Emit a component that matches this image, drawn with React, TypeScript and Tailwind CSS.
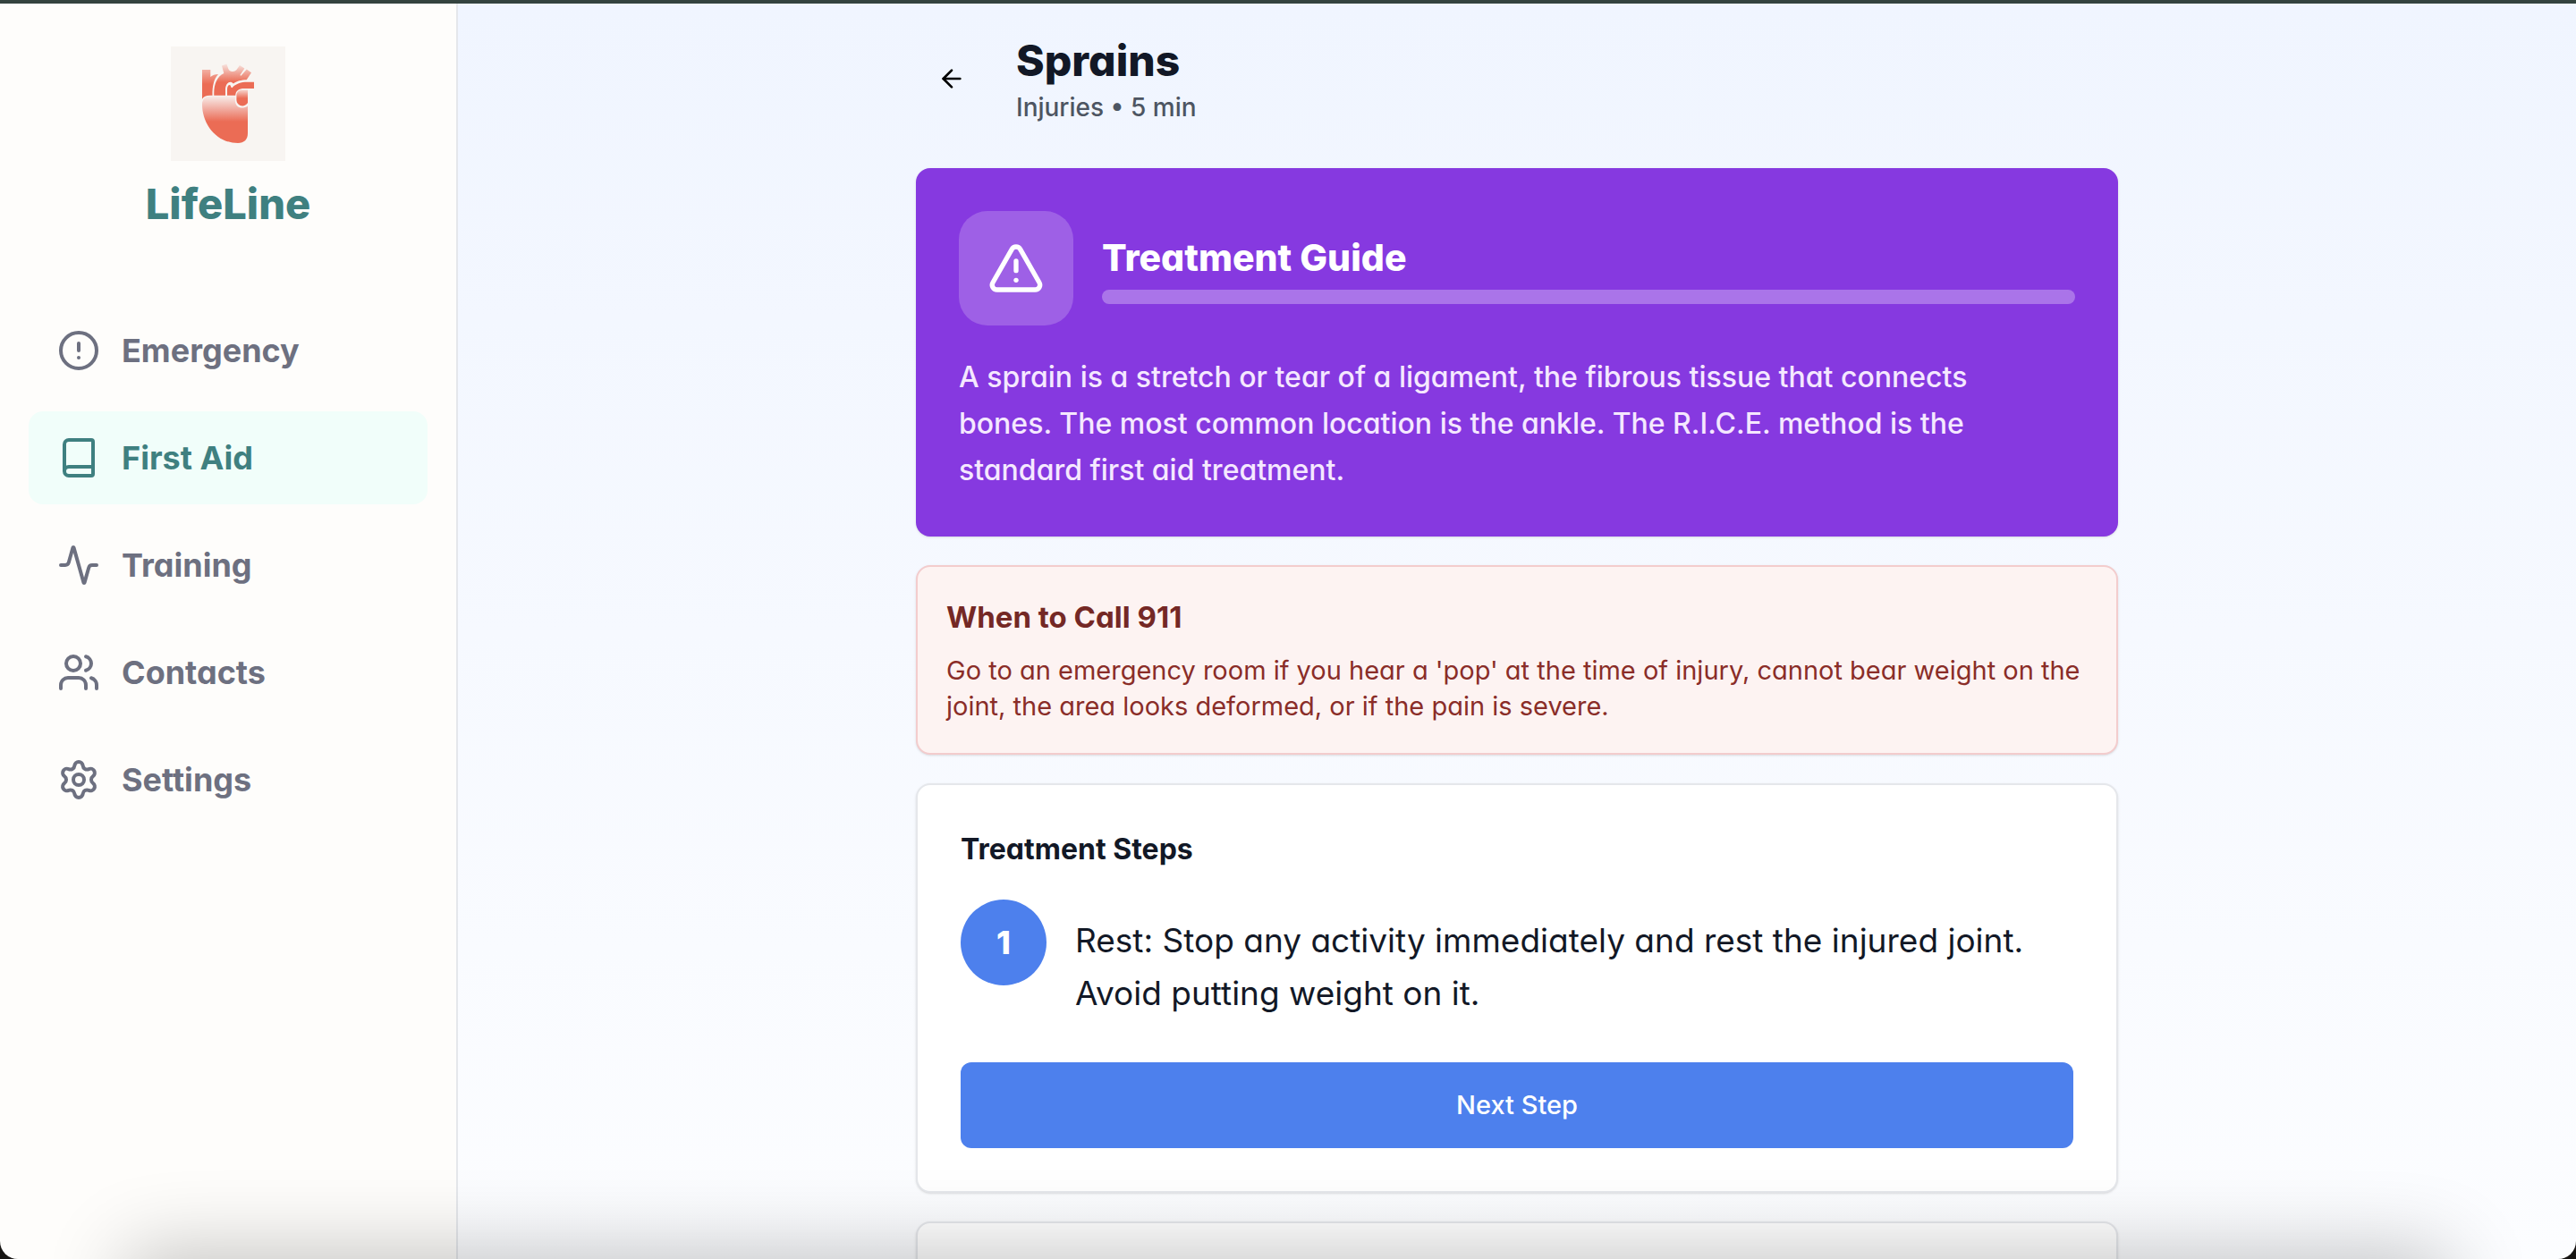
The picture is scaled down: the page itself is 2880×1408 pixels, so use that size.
import { useState } from 'react';
import { Activity, ArrowLeft, Book, CircleAlert, Settings, TriangleAlert, Users } from 'lucide-react';
import type { LucideIcon } from 'lucide-react';

type NavItem = {
  label: string;
  icon: LucideIcon;
};

const navItems: NavItem[] = [
  { label: 'Emergency', icon: CircleAlert },
  { label: 'First Aid', icon: Book },
  { label: 'Training', icon: Activity },
  { label: 'Contacts', icon: Users },
  { label: 'Settings', icon: Settings },
];

const steps = ['Rest: Stop any activity immediately and rest the injured joint. Avoid putting weight on it.'];

const HeartLogo = () => (
  <svg viewBox="0 0 128 128" className="size-32 bg-[#f8f5f2]" role="img" aria-label="LifeLine logo">
    <defs>
      <linearGradient id="vessels" gradientUnits="userSpaceOnUse" x1="0" y1="19" x2="0" y2="40">
        <stop offset="0" stopColor="#f8e8e4" />
        <stop offset="0.5" stopColor="#f0a699" />
        <stop offset="1" stopColor="#eb6c55" />
      </linearGradient>
      <linearGradient id="vein" gradientUnits="userSpaceOnUse" x1="0" y1="24" x2="0" y2="42">
        <stop offset="0" stopColor="#f3b8ad" />
        <stop offset="1" stopColor="#eb6c55" />
      </linearGradient>
      <linearGradient id="ventricle" gradientUnits="userSpaceOnUse" x1="0" y1="55" x2="0" y2="84">
        <stop offset="0" stopColor="#f8efec" />
        <stop offset="0.55" stopColor="#f0a69a" />
        <stop offset="1" stopColor="#eb6c55" />
      </linearGradient>
      <linearGradient id="atrium" gradientUnits="userSpaceOnUse" x1="0" y1="47" x2="0" y2="58">
        <stop offset="0" stopColor="#f8e6e1" />
        <stop offset="1" stopColor="#eb6c55" />
      </linearGradient>
    </defs>
    <path fill="url(#vein)" d="M35 26h9.3v8c2.4-2 5-3 8.7-3.1-5 5.5-6.6 13-6.5 23.8h-3c-4 0-7 1.5-8.5 4z" />
    <path
      fill="url(#vessels)"
      d="M48.3 54.7C47.8 43 51 34 59.3 30L57 21.5l5.4-2 1.8 5.2c1.5 4.3 7 4 9.3 1.3l3.5-5 5.4 3.6-5 7.4 1 .7 6.4-7.2 5.2 3.7-5.3 8c-6 .2-11.5 1.3-14.7 4.3-4.5-4.5-9 .5-9 7v6.2z"
    />
    <path
      fill="#eb6c55"
      d="M63 54.7v-7c0-4.5 3.6-7 4.3-2.3l1.2.8c4-4.5 10-6.4 17-6.4H93V47H82c-6 0-9.5 2.5-9.8 7.7z"
    />
    <path
      fill="url(#ventricle)"
      d="M44.5 55.3h27.3V60c0 9 8.5 10.5 14.2 6.5V97c0 7-4 11-11 11-24 0-40-21-40-43.5 0-5.5 4-9.2 9.500-9.200z"
    />
    <path fill="url(#atrium)" d="M80 48.5h6V63c-4 6-12.6 3.5-12.6-3.5V55c0-4 2.600-6.500 6.600-6.500z" />
  </svg>
);

const Sidebar = () => {
  const [active, setActive] = useState('First Aid');

  return (
    <aside className="flex w-[512px] shrink-0 flex-col border-r-2 border-gray-200 bg-[#fefdfb] px-8 pt-12">
      <div className="mb-20 flex flex-col items-center gap-4">
        <HeartLogo />
        <span className="text-[47px] leading-[64px] font-extrabold text-[#3f8080]">LifeLine</span>
      </div>
      <nav className="flex flex-col gap-4">
        {navItems.map(({ label, icon: Icon }) => (
          <button
            key={label}
            type="button"
            onClick={() => setActive(label)}
            className={`flex h-[104px] items-center gap-6 rounded-2xl px-8 text-[36px] font-bold ${
              label === active ? 'bg-[#f1fefa] text-[#3f8080]' : 'text-[#6d7080]'
            }`}
          >
            <Icon size={48} />
            {label}
          </button>
        ))}
      </nav>
    </aside>
  );
};

const GuideCard = () => (
  <section className="rounded-2xl bg-[#8639e0] p-12 text-white shadow-sm">
    <div className="mb-8 flex items-center gap-8">
      <div className="flex size-32 shrink-0 items-center justify-center rounded-[32px] bg-white/20">
        <TriangleAlert size={64} />
      </div>
      <div className="flex-1">
        <h2 className="mb-2 text-[41px] leading-[56px] font-extrabold">Treatment Guide</h2>
        <div className="h-4 rounded-full bg-white/30" />
      </div>
    </div>
    <p className="pr-8 text-[32px] leading-[52px] font-medium text-[#f5e8ff]">
      A sprain is a stretch or tear of a ligament, the fibrous tissue that connects bones. The most common location is
      the ankle. The R.I.C.E. method is the standard first aid treatment.
    </p>
  </section>
);

const WarningCard = () => (
  <section className="rounded-2xl border-2 border-[#f3cccd] bg-[#fdf3f2] p-8 shadow-sm">
    <h3 className="mb-4 text-[33px] leading-[48px] font-bold text-[#742825]">When to Call 911</h3>
    <p className="text-[29px] leading-[40px] text-[#8a2d28]">
      Go to an emergency room if you hear a 'pop' at the time of injury, cannot bear weight on the joint, the area looks
      deformed, or if the pain is severe.
    </p>
  </section>
);

const StepsCard = () => (
  <section className="rounded-2xl border-2 border-gray-200 bg-white p-12 shadow-sm">
    <h3 className="mb-8 text-[32px] leading-[48px] font-bold text-[#121826]">Treatment Steps</h3>
    {steps.map((step, i) => (
      <div key={step} className="mb-12 flex items-start gap-8">
        <span className="flex size-24 shrink-0 items-center justify-center rounded-full bg-[#4d80ed] text-[36px] font-extrabold text-white">
          {i + 1}
        </span>
        <p className="flex-1 pt-4 text-[37px] leading-[59px] text-[#121826]">{step}</p>
      </div>
    ))}
    <button type="button" className="h-24 w-full rounded-xl bg-[#4d80ed] text-[29px] font-medium text-white">
      Next Step
    </button>
  </section>
);

export default function App() {
  return (
    <div className="h-screen overflow-hidden bg-[#171513]">
      <div className="relative flex h-full flex-col overflow-hidden rounded-b-[20px] font-['Inter','Liberation_Sans',sans-serif] [font-feature-settings:'cv11']">
        <div className="h-1 shrink-0 bg-[#34433f]" />
        <div className="flex min-h-0 flex-1">
          <Sidebar />
          <main className="min-w-0 flex-1 overflow-hidden bg-linear-to-b from-[#f0f5ff] to-[#fcfdff] pt-8">
            <div className="mx-auto flex max-w-[1344px] flex-col gap-8">
              <header className="mb-4 flex items-center gap-8">
                <button type="button" aria-label="Back" className="flex size-20 items-center justify-center rounded-xl text-black">
                  <ArrowLeft size={32} />
                </button>
                <div>
                  <h1 className="text-[48px] leading-[64px] font-extrabold text-[#121826]">Sprains</h1>
                  <p className="text-[28px] leading-[40px] font-medium text-[#4d5562]">Injuries • 5 min</p>
                </div>
              </header>
              <GuideCard />
              <WarningCard />
              <StepsCard />
              <section className="h-64 rounded-2xl border-2 border-gray-200 bg-white shadow-sm" />
            </div>
          </main>
        </div>
        {/* shade cast upwards along the bottom edge */}
        <div className="pointer-events-none absolute inset-x-[150px] top-full h-24 shadow-[0_0_90px_8px_rgba(0,0,0,0.24)]" />
      </div>
    </div>
  );
}
